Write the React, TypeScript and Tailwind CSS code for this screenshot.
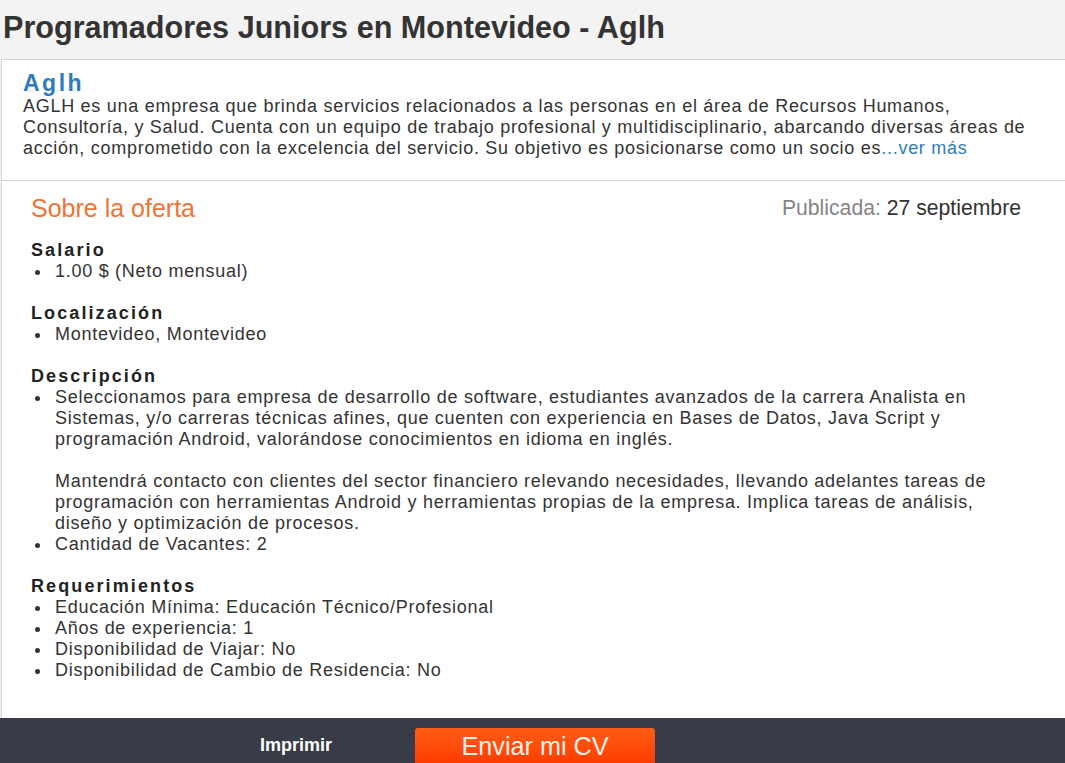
import React from "react";

const font = { fontFamily: '"Liberation Sans", Arial, sans-serif' };

function Bullet({ children }: { children: React.ReactNode }) {
  return (
    <li className="flex">
      <span className="w-[24px] shrink-0 flex justify-start pl-[4px] pt-[9px]">
        <span className="block w-[5px] h-[5px] rounded-full bg-[#333]" />
      </span>
      <span>{children}</span>
    </li>
  );
}

function Section({ title, children }: { title: string; children: React.ReactNode }) {
  return (
    <div className="mt-[21px] first:mt-0">
      <h3 className="text-[18px] leading-[21px] tracking-[2.1px] font-bold text-[#222]">{title}</h3>
      <ul className="text-[18px] leading-[21px] tracking-[0.72px] text-[#333]">{children}</ul>
    </div>
  );
}

export default function App() {
  return (
    <div style={font} className="w-[1065px] h-[763px] overflow-hidden bg-[#f4f3f3] flex flex-col">
      <div className="h-[59px] pl-[3px] pt-[9px] shrink-0">
        <h1 className="text-[30.6px] leading-[36px] font-bold text-[#333] whitespace-nowrap">
          Programadores Juniors en Montevideo - Aglh
        </h1>
      </div>
      <div className="ml-[1px] flex-1 bg-white border-l border-t border-[#d4d4d4] flex flex-col">
        <div className="pl-[21px] pt-[10px] h-[121px] border-b border-[#d4d4d4] whitespace-nowrap">
          <div className="text-[23px] leading-[26px] tracking-[2.5px] font-bold text-[#2f7cbd]">Aglh</div>
          <p className="text-[18px] leading-[21px] tracking-[0.72px] text-[#333]">
            AGLH es una empresa que brinda servicios relacionados a las personas en el área de Recursos Humanos,
            <br />
            Consultoría, y Salud. Cuenta con un equipo de trabajo profesional y multidisciplinario, abarcando diversas áreas de
            <br />
            acción, comprometido con la excelencia del servicio. Su objetivo es posicionarse como un socio es
            <span className="text-[#2f7cbd]">...ver más</span>
          </p>
        </div>
        <div className="flex-1 pl-[29px] pr-[44px] pt-[12px] whitespace-nowrap">
          <div className="flex items-center justify-between h-[30px]">
            <h2 className="text-[25px] leading-[30px] text-[#ef7435]">Sobre la oferta</h2>
            <div className="text-[21.2px] leading-[30px] text-[#333]">
              <span className="text-[#858585]">Publicada:</span> 27 septiembre
            </div>
          </div>
          <div className="mt-[17px]">
            <Section title="Salario">
              <Bullet>1.00 $ (Neto mensual)</Bullet>
            </Section>
            <Section title="Localización">
              <Bullet>Montevideo, Montevideo</Bullet>
            </Section>
            <Section title="Descripción">
              <Bullet>
                Seleccionamos para empresa de desarrollo de software, estudiantes avanzados de la carrera Analista en
                <br />
                Sistemas, y/o carreras técnicas afines, que cuenten con experiencia en Bases de Datos, Java Script y
                <br />
                programación Android, valorándose conocimientos en idioma en inglés.
                <br />
                <br />
                Mantendrá contacto con clientes del sector financiero relevando necesidades, llevando adelantes tareas de
                <br />
                programación con herramientas Android y herramientas propias de la empresa. Implica tareas de análisis,
                <br />
                diseño y optimización de procesos.
              </Bullet>
              <Bullet>Cantidad de Vacantes: 2</Bullet>
            </Section>
            <Section title="Requerimientos">
              <Bullet>Educación Mínima: Educación Técnico/Profesional</Bullet>
              <Bullet>Años de experiencia: 1</Bullet>
              <Bullet>Disponibilidad de Viajar: No</Bullet>
              <Bullet>Disponibilidad de Cambio de Residencia: No</Bullet>
            </Section>
          </div>
        </div>
      </div>
      <div className="h-[45px] shrink-0 bg-[#373c46] flex items-end pl-[260px]">
        <span className="self-center pt-[10px] text-[18px] font-bold text-white w-[155px]">Imprimir</span>
        <button className="w-[240px] h-[35px] rounded-t-[3px] bg-gradient-to-b from-[#ff5c16] to-[#ff3c00] text-[25.2px] leading-[35px] text-[#fff1ea] pt-[1px]">
          Enviar mi CV
        </button>
      </div>
    </div>
  );
}
